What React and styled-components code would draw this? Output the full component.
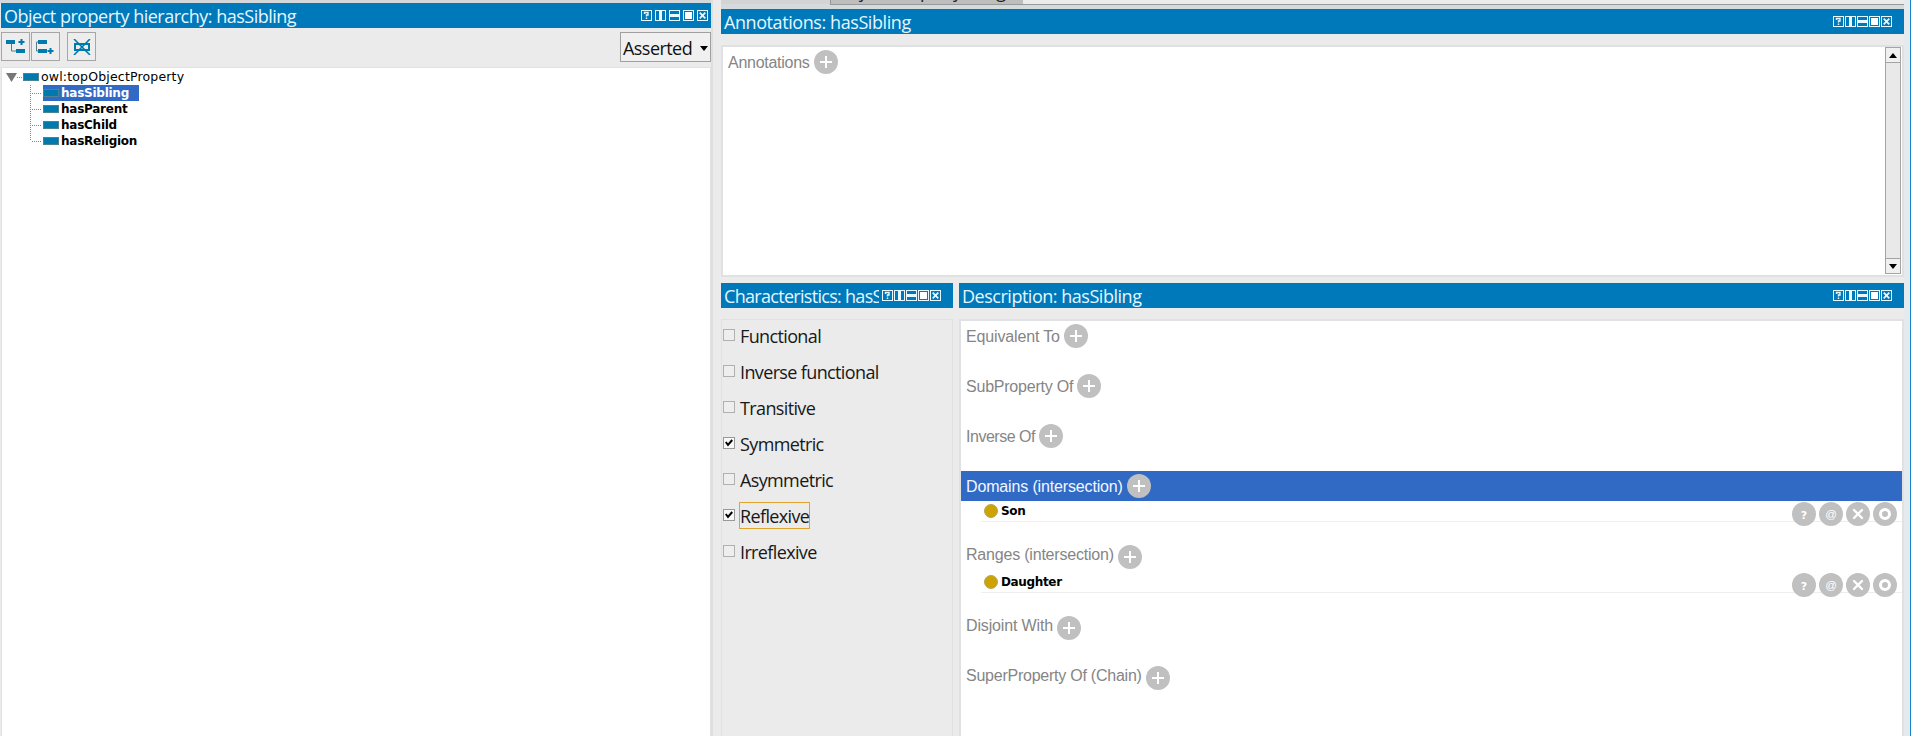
import React from "react";
import styled, { createGlobalStyle, css } from "styled-components";

const Global = createGlobalStyle`
  * { box-sizing: border-box; }
  html, body { margin: 0; padding: 0; height: 100%; overflow: hidden; background: #ebebeb; }
  #root { height: 100%; }
`;

const ui = css`font-family: "Open Sans", "Noto Sans", sans-serif;`;

const Window = styled.div`
  display: flex;
  width: 1911px;
  height: 736px;
  background: #ebebeb;
  overflow: hidden;
`;

const LeftPane = styled.section`
  width: 713px;
  padding-top: 3px;
  border-right: 2px solid #dfdfdf;
  background: linear-gradient(#d4d8da 0 3px, #ebebeb 3px);
  display: flex;
  flex-direction: column;
  flex: none;
`;

const TitleBar = styled.header`
  ${ui}
  display: flex;
  align-items: center;
  height: 25px;
  flex: none;
  background: #0079ba;
  color: #e6f6ff;
  font-size: 18px;
  margin-left: ${(p) => p.$left || 0}px;
  padding: 0 ${(p) => p.$right || 12}px 0 3px;
`;

const Title = styled.h2`
  flex: ${(p) => (p.$clip ? `0 0 ${p.$clip}px` : "1")};
  margin: 0;
  padding-top: 2px;
  font-size: inherit;
  font-weight: 400;
  line-height: 23px;
  white-space: nowrap;
  overflow: hidden;
  letter-spacing: ${(p) => p.$track || -0.5}px;
`;

const Controls = styled.svg`
  display: block;
  flex: none;
  height: 11px;
  margin-top: -1px;
  margin-left: ${(p) => p.$gap || 0}px;
`;

function PanelControls({ gap, pitch = 12 }) {
  const width = pitch * 4 + 11;
  const at = (i) => `translate(${pitch * i} 0)`;
  return (
    <Controls $gap={gap} width={width} viewBox={`0 0 ${width} 11`} fill="none" stroke="#e8f8ff">
      {[0, 1, 2, 3, 4].map((i) => (
        <rect key={i} x={pitch * i + 0.5} y="0.5" width="10" height="10" />
      ))}
      <path d="M3.5 4V2.500H7V5H5.500V6.500M5.500 7.500V9" strokeWidth="1.4" />
      <path transform={at(1)} d="M5.500 1V10" strokeWidth="3" />
      <path transform={at(2)} d="M1 5.500H10" strokeWidth="3" />
      <rect transform={at(3)} x="2" y="2" width="7" height="7" fill="#fff" stroke="none" />
      <path transform={at(4)} d="M2.700 2.700L8.300 8.300M8.300 2.700L2.700 8.300" strokeWidth="1.7" />
    </Controls>
  );
}

const Toolbar = styled.div`
  ${ui}
  display: flex;
  align-items: flex-start;
  height: 39px;
  flex: none;
  padding: 4px 0 0 1px;
`;

const ToolButton = styled.button`
  width: 29px;
  height: 29px;
  padding: 0;
  margin: 0 ${(p) => p.$after || 1}px 0 0;
  border: 1px solid #a6a6a6;
  background: #ededed;
  display: grid;
  place-items: center;
`;

const Combo = styled.div`
  margin-left: auto;
  width: 91px;
  height: 30px;
  border: 1px solid #a0a0a0;
  background: #f0f0f0;
  display: flex;
  align-items: center;
  justify-content: space-between;
  padding: 2px 2px 0 2px;
  font-size: 18px;
  letter-spacing: -0.55px;
  color: #111;
`;

const Sheet = styled.div`
  flex: 1;
  min-height: 0;
  margin-left: ${(p) => p.$left || 0}px;
  background: ${(p) => (p.$plain ? "#ebebeb" : "#fff")};
  border: ${(p) => p.$edge || 1}px solid #dfe1e2;
  border-bottom-width: ${(p) => (p.$open ? 0 : 2)}px;
`;

const Tree = styled.ul`
  list-style: none;
  margin: 0;
  padding: 1px 0 0;
  font-family: "DejaVu Sans", sans-serif;
  font-size: 12px;
`;

const Leaf = styled.li`
  display: flex;
  align-items: center;
  height: 16px;
  padding-left: ${(p) => (p.$root ? 3 : 28)}px;
  color: ${(p) => (p.$selected ? "#fff" : "#000")};
  font-size: ${(p) => (p.$root ? 12.5 : 12)}px;
  font-weight: ${(p) => (p.$root ? 400 : 700)};
  letter-spacing: ${(p) => (p.$root ? 0.17 : -0.25)}px;
  white-space: nowrap;
`;

const Branch = styled.svg`
  flex: none;
  display: block;
`;

const LeafLabel = styled.span`
  display: flex;
  align-items: center;
  gap: 2px;
  height: 16px;
  padding-right: 10px;
  line-height: 16px;
  background: ${(p) => (p.$selected ? "#316ac5" : "transparent")};
`;

const PropertyMark = styled.i`
  width: 16px;
  height: 8px;
  background: #0079ad;
  border: 1px solid #4b8294;
`;

const RightPane = styled.main`
  flex: 1;
  min-width: 0;
  padding-left: 8px;
  display: flex;
  flex-direction: column;
`;

const TabStrip = styled.div`
  ${ui}
  height: 9px;
  flex: none;
  display: flex;
  align-items: flex-start;
  background: linear-gradient(#d4d4d4 0 4px, #d5dadd 4px);
  padding-left: 109px;
`;

const Tab = styled.div`
  width: 193px;
  height: 5px;
  overflow: hidden;
  background: #bebebe;
  border: solid #999;
  border-width: 0 0 1px 1px;
  padding-left: 5px;
  display: flex;
  align-items: flex-start;
`;

const TabLabel = styled.span`
  margin-top: -14px;
  color: #222;
  font-size: 18px;
  line-height: 10px;
  letter-spacing: -0.45px;
  white-space: nowrap;
`;

const TabRest = styled.div`
  flex: 1;
  height: 5px;
  background: #ebebeb;
  border-bottom: 1px solid #999;
`;

const AnnotationPanel = styled.section`
  height: 268px;
  flex: none;
  display: flex;
  flex-direction: column;
`;

const AnnotationSheet = styled(Sheet)`
  margin-top: 11px;
  display: flex;
  justify-content: space-between;
`;

const ScrollBar = styled.div`
  width: 16px;
  margin: 0 1px 1px 0;
  border: 1px solid #a4a4a4;
  background: #e9e9e9;
  display: flex;
  flex-direction: column;
  justify-content: space-between;
`;

const ScrollButton = styled.span`
  height: 15px;
  background: #f0f0f0;
  display: grid;
  place-items: center;
  border: solid #a4a4a4;
  border-width: ${(p) => (p.$down ? "1px 0 0" : "0 0 1px")};
`;

const Lower = styled.div`
  flex: 1;
  min-height: 0;
  display: flex;
  gap: 6px;
  padding-top: 6px;
`;

const Column = styled.section`
  width: ${(p) => (p.$width ? `${p.$width}px` : "auto")};
  flex: ${(p) => (p.$width ? "none" : "1")};
  min-width: 0;
  display: flex;
  flex-direction: column;
  gap: 11px;
`;

const Check = styled.label`
  ${ui}
  display: flex;
  align-items: flex-start;
  height: 36px;
  padding: 2px 0 0 1px;
  gap: 4px;
  color: #181818;
`;

const Box = styled.span`
  width: 12px;
  height: 12px;
  margin-top: 7px;
  border: 1px solid ${(p) => (p.$on ? "#999" : "#b0b0b0")};
  background: ${(p) => (p.$on ? "#f8f8f8" : "#eee")};
  display: grid;
  place-items: center;
`;

const CheckText = styled.span`
  font-size: 18px;
  line-height: 26px;
  height: 27px;
  border: 1px solid ${(p) => (p.$focus ? "#e0a32c" : "transparent")};
  letter-spacing: -0.63px;
  white-space: nowrap;
`;

const Section = styled.div`
  display: flex;
  align-items: center;
  gap: 4px;
  height: 30px;
  margin-top: ${(p) => p.$before || 0}px;
  padding-left: 5px;
  font-family: "Liberation Sans", Arial, sans-serif;
  font-size: 16px;
  white-space: nowrap;
  color: ${(p) => (p.$selected ? "#f2f7ff" : "#858585")};
  background: ${(p) => (p.$selected ? "#316ac5" : "transparent")};
`;

const SectionText = styled.span`
  padding: ${(p) => (p.$lift ? `0 0 ${p.$lift}px` : "2px 0 0")};
  letter-spacing: ${(p) => p.$track || 0}px;
`;

const Round = styled.svg`
  display: block;
  width: 24px;
  height: 24px;
  flex: none;
`;

const ClassRow = styled.div`
  display: flex;
  justify-content: space-between;
  height: 25px;
  padding: 0 5px 0 20px;
  background: linear-gradient(#eee, #eee) 20px 20px / 100% 1px no-repeat;
`;

const ClassName = styled.span`
  display: flex;
  align-items: center;
  gap: 3px;
  height: 20px;
  padding-left: 3px;
  font: 700 12px/16px "DejaVu Sans", sans-serif;
  letter-spacing: -0.35px;
  color: #000;
`;

const ClassDot = styled.i`
  width: 14px;
  height: 14px;
  border-radius: 50%;
  background: #cca300;
  border: 1px solid #b9a45d;
`;

const Actions = styled.span`
  display: flex;
  gap: 3px;
  padding-top: 1px;
`;

const WindowEdge = styled.div`
  width: 7px;
  flex: none;
  border-right: 1px solid #1685d1;
  background: #e6eaec;
`;

function RoundButton({ kind }) {
  return (
    <Round viewBox="0 0 24 24">
      <circle cx="12" cy="12" r="12" fill="#c0c0c0" />
      {kind === "add" && <path d="M12 6V18M6 12H18" stroke="#fff" strokeWidth="2" />}
      {kind === "remove" && <path d="M8 8L16 16M16 8L8 16" stroke="#fff" strokeWidth="2.4" strokeLinecap="round" />}
      {kind === "edit" && <circle cx="12" cy="12" r="4.5" fill="none" stroke="#fff" strokeWidth="3" />}
      {kind === "explain" && <text x="12" y="17" textAnchor="middle" fill="#fff" fontFamily="DejaVu Sans" fontWeight="700" fontSize="11">?</text>}
      {kind === "annotate" && <text x="12" y="15.500" textAnchor="middle" fill="#fff" fontFamily="Liberation Sans" fontSize="11.5">@</text>}
    </Round>
  );
}

function Arrow({ up }) {
  return <svg width="8" height="5"><path d={up ? "M0 5L4 0L8 5Z" : "M0 0L8 0L4 5Z"} fill="#000" /></svg>;
}

function TreeItem({ name, selected, last }) {
  return (
    <Leaf $selected={selected}>
      <Branch width="13" height="16" stroke="#888" strokeDasharray="1 1" shapeRendering="crispEdges">
        <path d={`M.5 0V${last ? 8 : 16}M2 8.5H12`} />
      </Branch>
      <LeafLabel $selected={selected}><PropertyMark />{name}</LeafLabel>
    </Leaf>
  );
}

function Entry({ name }) {
  return (
    <ClassRow>
      <ClassName><ClassDot />{name}</ClassName>
      <Actions>
        {["explain", "annotate", "remove", "edit"].map((kind) => <RoundButton key={kind} kind={kind} />)}
      </Actions>
    </ClassRow>
  );
}

function Heading({ text, track, lift, before, selected }) {
  return (
    <Section $before={before} $selected={selected}>
      <SectionText $track={track} $lift={lift}>{text}</SectionText>
      <RoundButton kind="add" />
    </Section>
  );
}

const characteristics = [
  { name: "Functional" },
  { name: "Inverse functional" },
  { name: "Transitive" },
  { name: "Symmetric", on: true },
  { name: "Asymmetric" },
  { name: "Reflexive", on: true, focus: true },
  { name: "Irreflexive" },
];

export default function App() {
  return (
    <Window>
      <Global />
      <LeftPane>
        <TitleBar $left={1} $right={3}><Title>Object property hierarchy: hasSibling</Title><PanelControls pitch={14} /></TitleBar>
        <Toolbar>
          <ToolButton>
            <svg width="20" height="16"><path d="M0 1H9V5H0ZM10 10H19V14H10Z" fill="#0079ad" /><path d="M5.5 5V12H10" fill="none" stroke="#587a8a" /><path d="M15.500 0V6M12.500 3H18.500" stroke="#0079ad" strokeWidth="2" /></svg>
          </ToolButton>
          <ToolButton $after={7}>
            <svg width="20" height="16"><path d="M2 1H11V5H2ZM2 10H11V14H2Z" fill="#0079ad" /><path d="M2 3H.5V12H2" fill="none" stroke="#587a8a" /><path d="M14.500 9V15M11.500 12H17.500" stroke="#0079ad" strokeWidth="2" /></svg>
          </ToolButton>
          <ToolButton>
            <svg width="18" height="16" fill="none" stroke="#0079ad"><rect x="2" y="5" width="14" height="6" strokeWidth="2" /><path d="M1 0L17 16M17 0L1 16" strokeWidth="1.6" /></svg>
          </ToolButton>
          <Combo>Asserted<Arrow /></Combo>
        </Toolbar>
        <Sheet $left={1} $open>
          <Tree>
            <Leaf $root>
              <Branch width="18" height="16"><path d="M1 4H12L6.500 13Z" fill="#777" /><path d="M12 8.500H18" stroke="#888" strokeDasharray="1 1" /></Branch>
              <LeafLabel><PropertyMark />owl:topObjectProperty</LeafLabel>
            </Leaf>
            <TreeItem name="hasSibling" selected />
            <TreeItem name="hasParent" />
            <TreeItem name="hasChild" />
            <TreeItem name="hasReligion" last />
          </Tree>
        </Sheet>
      </LeftPane>
      <RightPane>
        <TabStrip><Tab><TabLabel>Object Property Usage</TabLabel></Tab><TabRest /></TabStrip>
        <AnnotationPanel>
          <TitleBar><Title $track={-0.42}>Annotations: hasSibling</Title><PanelControls /></TitleBar>
          <AnnotationSheet $edge={2}>
            <Heading text="Annotations" track={-0.27} />
            <ScrollBar><ScrollButton><Arrow up /></ScrollButton><ScrollButton $down><Arrow /></ScrollButton></ScrollBar>
          </AnnotationSheet>
        </AnnotationPanel>
        <Lower>
          <Column $width={232}>
            <TitleBar><Title $clip={155} $track={-0.7}>Characteristics: hasSibling</Title><PanelControls gap={3} /></TitleBar>
            <Sheet $plain $open>
              {characteristics.map((c) => (
                <Check key={c.name}>
                  <Box $on={c.on}>{c.on && <svg width="8" height="8"><path d="M.8 3L3 6L7.200 1" fill="none" stroke="#000" strokeWidth="2" /></svg>}</Box>
                  <CheckText $focus={c.focus}>{c.name}</CheckText>
                </Check>
              ))}
            </Sheet>
          </Column>
          <Column>
            <TitleBar><Title $track={-0.48}>Description: hasSibling</Title><PanelControls /></TitleBar>
            <Sheet $open $edge={2}>
              <Heading text="Equivalent To" track={-0.15} />
              <Heading text="SubProperty Of" track={-0.22} before={20} />
              <Heading text="Inverse Of" track={-0.48} before={20} />
              <Heading text="Domains (intersection)" track={-0.15} before={20} selected />
              <Entry name="Son" />
              <Heading text="Ranges (intersection)" track={-0.2} before={16} lift={4} />
              <Entry name="Daughter" />
              <Heading text="Disjoint With" track={-0.15} before={16} lift={4} />
              <Heading text="SuperProperty Of (Chain)" track={-0.24} before={20} lift={4} />
            </Sheet>
          </Column>
        </Lower>
      </RightPane>
      <WindowEdge />
    </Window>
  );
}
